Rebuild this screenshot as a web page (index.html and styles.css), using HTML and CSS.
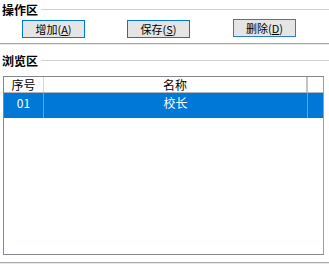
FILE: index.html
```html
<!DOCTYPE html>
<html lang="zh-CN">
<head>
    <meta charset="UTF-8">
    <title>职务设置</title>
    <link rel="stylesheet" href="styles.css">
</head>
<body>
    <div class="group-title"><span>操作区</span><div class="group-line"></div></div>
    <div class="toolbar">
        <button type="button" class="btn">增加(<u>A</u>)</button>
        <button type="button" class="btn">保存(<u>S</u>)</button>
        <button type="button" class="btn btn-del">删除(<u>D</u>)</button>
    </div>
    <div class="separator"></div>

    <div class="group-title group-browse"><span>浏览区</span><div class="group-line"></div></div>
    <div class="listview">
        <div class="lv-row lv-header">
            <div class="lv-cell">序号</div>
            <div class="lv-cell">名称</div>
            <div class="lv-cell"></div>
        </div>
        <div class="lv-row lv-selected">
            <div class="lv-cell">01</div>
            <div class="lv-cell">校长</div>
            <div class="lv-cell"></div>
        </div>
    </div>
    <div class="separator separator-bottom"></div>
</body>
</html>
```

FILE: styles.css
```css
body {
    margin: 0;
    background-color: #ffffff;
    font-family: "Noto Sans CJK SC", "Liberation Sans", sans-serif;
    font-size: 12px;
    color: #000;
}

.group-title {
    display: flex;
    align-items: center;
    height: 14px;
    padding: 2px 0 0 2px;
    font-weight: bold;
    font-size: 12px;
}

.group-line {
    flex: 1;
    margin-left: 3px;
    border-top: 1px solid #d0d0d0;
}

.toolbar {
    display: flex;
    gap: 42px;
    margin: 4px 0 0 22px;
}

.btn {
    width: 63px;
    height: 18px;
    padding: 0;
    border: 1px solid #0078d7;
    background-color: #e5e5e5;
    font-family: "Noto Sans CJK SC", sans-serif;
    font-size: 11px;
    line-height: 15px;
    color: #000;
}

.btn-del {
    margin-top: -1px;
    margin-left: 1px;
    border-color: #2a80c8;
}

.separator {
    margin-top: 5px;
    border-top: 1px solid #a8a8a8;
    border-bottom: 1px solid #e8e8e8;
}

.group-browse {
    margin-top: 6px;
}

.listview {
    width: 319px;
    height: 177px;
    margin: 9px 0 0 3px;
    border: 1px solid #828790;
    border-right-color: #a0a0a0;
    background-color: #fff;
}

.lv-row {
    display: grid;
    grid-template-columns: 40px 264px 1fr;
}

.lv-header {
    height: 15px;
    border-bottom: 1px solid #b4b4b4;
}

.lv-cell {
    text-align: center;
    border-right: 1px solid #d8d8d8;
    line-height: 15px;
}

.lv-header .lv-cell:nth-child(2) {
    border-right: 2px solid #c4c4c4;
}

.lv-header .lv-cell:last-child {
    border-right: none;
}

.lv-selected {
    height: 25px;
    background-color: #0078d7;
    color: #fff;
}

.lv-selected .lv-cell {
    line-height: 20px;
    border-right-color: #5aa5e3;
}

.lv-selected .lv-cell:last-child {
    border-right: none;
}

.separator-bottom {
    margin-top: 7px;
}
```
